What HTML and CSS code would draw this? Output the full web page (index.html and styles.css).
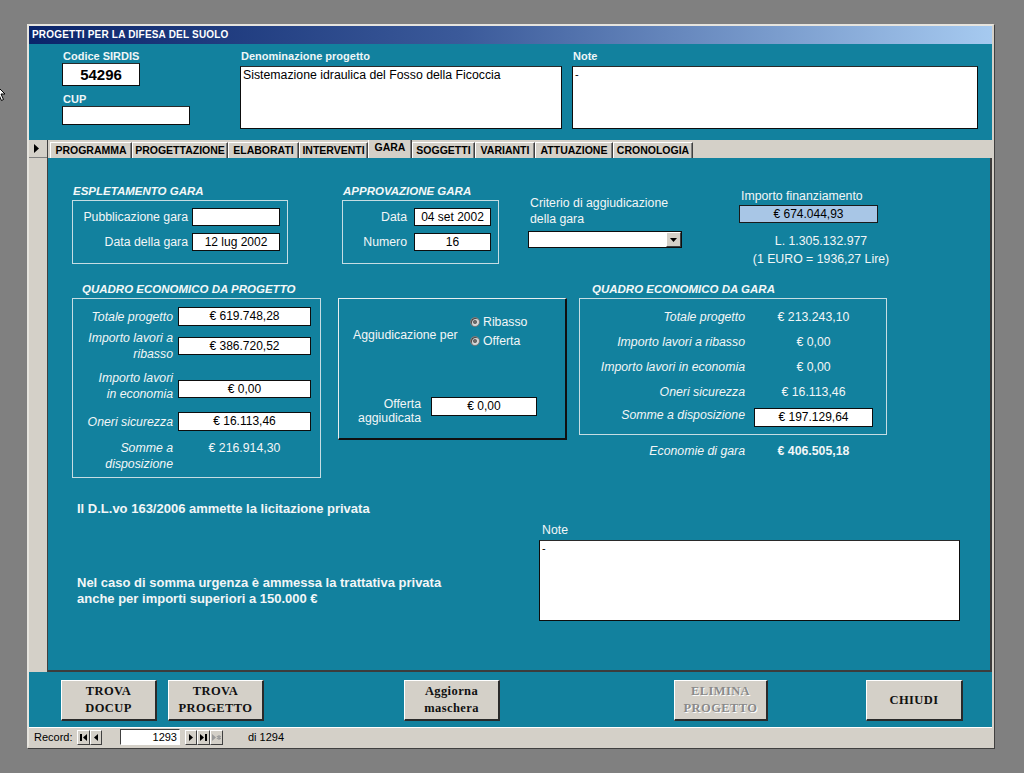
FILE: index.html
```html
<!DOCTYPE html>
<html lang="it">
<head>
<meta charset="utf-8">
<title>Progetti per la difesa del suolo</title>
<link rel="stylesheet" href="styles.css">
</head>
<body>
<svg class="cursor" width="12" height="18" viewBox="0 0 12 18"><path d="M1 1 L1 14 L4 11 L6.5 16.5 L8.5 15.5 L6 10 L10 10 Z" fill="#fff" stroke="#000" stroke-width="1"/></svg>
<div class="window">
  <div class="titlebar">PROGETTI PER LA DIFESA DEL SUOLO</div>
  <div class="header">
    <div class="hcol hcol-code">
      <div class="hlabel">Codice SIRDIS</div>
      <div class="field code-box">54296</div>
      <div class="hlabel cup-label">CUP</div>
      <div class="field cup-box"></div>
    </div>
    <div class="hcol hcol-name">
      <div class="hlabel">Denominazione progetto</div>
      <div class="field memo name-box">Sistemazione idraulica del Fosso della Ficoccia</div>
    </div>
    <div class="hcol hcol-note">
      <div class="hlabel">Note</div>
      <div class="field memo note-box">-</div>
    </div>
  </div>
  <div class="main">
    <div class="selector">
      <div class="sel-cell"><svg width="5" height="9" viewBox="0 0 5 9"><path d="M0 0 L5 4.5 L0 9 Z" fill="#000"/></svg></div>
    </div>
    <div class="tabctl">
      <div class="tabs">
        <div class="tab t1">PROGRAMMA</div>
        <div class="tab t2">PROGETTAZIONE</div>
        <div class="tab t3">ELABORATI</div>
        <div class="tab t4">INTERVENTI</div>
        <div class="tab t5 active">GARA</div>
        <div class="tab t6">SOGGETTI</div>
        <div class="tab t7">VARIANTI</div>
        <div class="tab t8">ATTUAZIONE</div>
        <div class="tab t9">CRONOLOGIA</div>
      </div>
      <div class="page">
        <div class="row row1">
          <div class="grp grp-a">
            <div class="gtitle">ESPLETAMENTO GARA</div>
            <div class="gbox">
              <div class="frow"><span class="lbl">Pubblicazione gara</span><span class="inp w88"></span></div>
              <div class="frow"><span class="lbl">Data della gara</span><span class="inp w88">12 lug 2002</span></div>
            </div>
          </div>
          <div class="grp grp-b">
            <div class="gtitle">APPROVAZIONE GARA</div>
            <div class="gbox">
              <div class="frow"><span class="lbl">Data</span><span class="inp w77">04 set 2002</span></div>
              <div class="frow"><span class="lbl">Numero</span><span class="inp w77">16</span></div>
            </div>
          </div>
          <div class="crit">
            <div class="crit-label">Criterio di aggiudicazione<br>della gara</div>
            <div class="combo"><span class="combo-btn"><svg width="7" height="4" viewBox="0 0 7 4"><path d="M0 0 L7 0 L3.5 4 Z" fill="#000"/></svg></span></div>
          </div>
          <div class="imp">
            <div class="imp-label">Importo finanziamento</div>
            <div class="imp-box">€ 674.044,93</div>
            <div class="imp-lines">L. 1.305.132.977<br>(1 EURO = 1936,27 Lire)</div>
          </div>
        </div>

        <div class="row row2">
          <div class="grp grp-c">
            <div class="gtitle">QUADRO ECONOMICO DA PROGETTO</div>
            <div class="gbox qbox">
              <div class="qrow q1"><span class="qlbl">Totale progetto</span><span class="inp qinp">€ 619.748,28</span></div>
              <div class="qrow q2"><span class="qlbl">Importo lavori a<br>ribasso</span><span class="inp qinp">€ 386.720,52</span></div>
              <div class="qrow q3"><span class="qlbl">Importo lavori<br>in economia</span><span class="inp qinp">€ 0,00</span></div>
              <div class="qrow q4"><span class="qlbl">Oneri sicurezza</span><span class="inp qinp">€ 16.113,46</span></div>
              <div class="qrow q5"><span class="qlbl">Somme a<br>disposizione</span><span class="qval">€ 216.914,30</span></div>
            </div>
          </div>

          <div class="mid">
            <div class="mid-top">
              <div class="mid-label">Aggiudicazione per</div>
              <div class="radios">
                <div class="ropt"><span class="radio"></span>Ribasso</div>
                <div class="ropt"><span class="radio"></span>Offerta</div>
              </div>
            </div>
            <div class="mid-bottom">
              <div class="mid-label2">Offerta<br>aggiudicata</div>
              <span class="inp minp">€ 0,00</span>
            </div>
          </div>

          <div class="grp grp-d">
            <div class="gtitle">QUADRO ECONOMICO DA GARA</div>
            <div class="gbox dbox">
              <div class="drow"><span class="dlbl">Totale progetto</span><span class="dval">€ 213.243,10</span></div>
              <div class="drow"><span class="dlbl">Importo lavori a ribasso</span><span class="dval">€ 0,00</span></div>
              <div class="drow"><span class="dlbl">Importo lavori in economia</span><span class="dval">€ 0,00</span></div>
              <div class="drow"><span class="dlbl">Oneri sicurezza</span><span class="dval">€ 16.113,46</span></div>
              <div class="drow drow-in"><span class="dlbl">Somme a disposizione</span><span class="inp dinp">€ 197.129,64</span></div>
            </div>
            <div class="erow"><span class="elbl">Economie di gara</span><span class="eval">€ 406.505,18</span></div>
          </div>
        </div>

        <div class="row row3">
          <div class="info">
            <p class="info1">Il D.L.vo 163/2006 ammette la licitazione privata</p>
            <p class="info2">Nel caso di somma urgenza è ammessa la trattativa privata<br>anche per importi superiori a 150.000 €</p>
          </div>
          <div class="note2">
            <div class="note2-label">Note</div>
            <div class="field memo note2-box">-</div>
          </div>
        </div>
      </div>
    </div>
  </div>
  <div class="buttons">
    <div class="btn b1">TROVA<br>DOCUP</div>
    <div class="btn b2">TROVA<br>PROGETTO</div>
    <div class="btn b3">Aggiorna<br>maschera</div>
    <div class="btn b4 disabled">ELIMINA<br>PROGETTO</div>
    <div class="btn b5">CHIUDI</div>
  </div>
  <div class="recordbar">
    <span class="rec-label">Record:</span>
    <span class="nav n1"><svg width="7" height="7" viewBox="0 0 7 7"><rect x="0" y="0" width="2" height="7" fill="#000"/><path d="M7 0 L3 3.5 L7 7 Z" fill="#000"/></svg></span>
    <span class="nav n2"><svg width="4" height="7" viewBox="0 0 4 7"><path d="M4 0 L0 3.5 L4 7 Z" fill="#000"/></svg></span>
    <span class="rec-input">1293</span>
    <span class="nav n3"><svg width="4" height="7" viewBox="0 0 4 7"><path d="M0 0 L4 3.5 L0 7 Z" fill="#000"/></svg></span>
    <span class="nav n4"><svg width="7" height="7" viewBox="0 0 7 7"><path d="M0 0 L4 3.5 L0 7 Z" fill="#000"/><rect x="5" y="0" width="2" height="7" fill="#000"/></svg></span>
    <span class="nav n5"><svg width="9" height="7" viewBox="0 0 9 7"><path d="M0 0 L4 3.5 L0 7 Z" fill="#9a9a9a"/><path d="M7 1 L7 6 M4.8 2.2 L9.2 4.8 M4.8 4.8 L9.2 2.2" stroke="#9a9a9a" stroke-width="1.2"/></svg></span>
    <span class="rec-of">di 1294</span>
  </div>
</div>
</body>
</html>
```

FILE: styles.css
```css
* { box-sizing: border-box; }
html, body { margin: 0; padding: 0; }
body {
  background: #808080;
  width: 1024px;
  height: 773px;
  overflow: hidden;
  position: relative;
  font-family: "Liberation Sans", Arial, sans-serif;
  color: #000;
}
.cursor { position: absolute; left: -5px; top: 84px; }

.window {
  margin-left: 27px;
  margin-top: 24px;
  width: 967px;
  height: 724px;
  border: 2px solid #d4d0c8;
  border-top-color: #e6e4de;
  border-left-color: #e6e4de;
  box-shadow: 1px 1px 0 #404040;
  display: flex;
  flex-direction: column;
}

.titlebar {
  height: 18px;
  line-height: 18px;
  padding-left: 3px;
  background: linear-gradient(to right, #0a246a, #3b5a9a 45%, #a6caf0);
  color: #fff;
  font-weight: bold;
  font-size: 10px;
  letter-spacing: 0.2px;
  white-space: nowrap;
}

/* Header */
.header {
  height: 96px;
  background: #12819e;
  display: flex;
  padding-left: 33px;
  padding-top: 5px;
}
.hlabel {
  color: #eef6f8;
  font-weight: bold;
  font-size: 11px;
  line-height: 14px;
  height: 14px;
  padding-left: 1px;
}
.field {
  background: #fff;
  border: 1px solid #0d0d0d;
  border-top-color: #2a2a2a;
}
.hcol-code { width: 128px; }
.code-box {
  width: 78px;
  height: 23px;
  text-align: center;
  font-weight: bold;
  font-size: 15px;
  line-height: 21px;
}
.cup-label { margin-top: 6px; }
.cup-box { width: 128px; height: 19px; margin-top: 0; }
.hcol-name { margin-left: 50px; }
.name-box, .note-box { margin-top: 3px; height: 63px; }
.name-box {
  width: 322px;
  font-size: 12.3px;
  line-height: 15px;
  padding: 1px 2px;
}
.hcol-note { margin-left: 10px; }
.note-box {
  width: 406px;
  font-size: 11px;
  line-height: 12px;
  padding: 1px 2px;
}
.memo { white-space: nowrap; }

/* Main: selector + tab control */
.main {
  height: 532px;
  display: flex;
}
.selector {
  width: 19px;
  background: #d4d0c8;
  border-right: 1px solid #404040;
}
.sel-cell {
  height: 18px;
  border-bottom: 1px solid #808080;
  display: flex;
  align-items: center;
  padding-left: 5px;
}
.tabctl {
  width: 944px;
  display: flex;
  flex-direction: column;
}
.tabs {
  height: 18px;
  background: #d4d0c8;
  display: flex;
  padding-left: 2px;
  align-items: flex-start;
}
.tab {
  height: 16px;
  margin-top: 2px;
  border-top: 1px solid #fff;
  border-left: 1px solid #fff;
  border-right: 1px solid #404040;
  box-shadow: inset -1px 0 0 #808080;
  font-size: 10.5px;
  font-weight: bold;
  line-height: 15px;
  text-align: center;
  white-space: nowrap;
  color: #000;
}
.tab.active {
  margin-top: 0;
  height: 18px;
  line-height: 14px;
  border-top: none;
}
.t1 { width: 82px; }
.t2 { width: 96px; }
.t3 { width: 71px; }
.t4 { width: 69px; }
.t5 { width: 44px; }
.t6 { width: 63px; }
.t7 { width: 60px; }
.t8 { width: 78px; }
.t9 { width: 80px; }

.page {
  height: 514px;
  background: #12819e;
  border-right: 2px solid #3c3c3c;
  border-bottom: 2px solid #3c3c3c;
  padding-top: 26px;
  color: #f2f6f7;
  font-size: 12.3px;
}
.row { display: flex; align-items: flex-start; }
.row1 { height: 82px; }
.row2 { margin-top: 16px; }
.row3 { margin-top: 24px; }

.gtitle {
  font-size: 11.5px;
  font-weight: bold;
  font-style: italic;
  line-height: 14px;
  height: 16px;
  white-space: nowrap;
  color: #f4f8f8;
}
.gbox {
  border: 1px solid #c6dde3;
}
.grp-a { margin-left: 24px; width: 216px; }
.grp-a .gtitle { padding-left: 1px; }
.grp-a .gbox, .grp-b .gbox {
  height: 64px;
  padding: 7px 7px 0 0;
  display: flex;
  flex-direction: column;
  gap: 7px;
}
.frow {
  display: flex;
  justify-content: flex-end;
  align-items: center;
  height: 18px;
  gap: 4px;
}
.grp-b .frow { gap: 7px; }
.lbl { white-space: nowrap; line-height: 14px; }
.inp {
  display: block;
  background: #fff;
  color: #000;
  border: 1px solid #0d0d0d;
  height: 18px;
  font-size: 12px;
  line-height: 16px;
  text-align: center;
  white-space: nowrap;
}
.w88 { width: 88px; }
.w77 { width: 77px; }
.grp-b { margin-left: 54px; width: 157px; }
.grp-b .gtitle { padding-left: 1px; }

.crit { margin-left: 29px; margin-top: 11px; width: 154px; }
.crit-label { line-height: 16px; padding-left: 2px; white-space: nowrap; }
.combo {
  margin-top: 4px;
  height: 17px;
  background: #fff;
  border: 1px solid #0d0d0d;
  display: flex;
  justify-content: flex-end;
}
.combo-btn {
  width: 15px;
  height: 15px;
  background: #d4d0c8;
  border-top: 1px solid #fff;
  border-left: 1px solid #fff;
  border-right: 1px solid #404040;
  border-bottom: 1px solid #404040;
  display: flex;
  align-items: center;
  justify-content: center;
}

.imp { margin-left: 57px; margin-top: 5px; width: 164px; }
.imp-label { line-height: 14px; padding-left: 2px; white-space: nowrap; }
.imp-box {
  margin-top: 2px;
  width: 139px;
  height: 18px;
  background: #a8c6e6;
  color: #000;
  border: 1px solid #1a1a1a;
  font-size: 12px;
  line-height: 16px;
  text-align: center;
}
.imp-lines {
  margin-top: 9px;
  line-height: 18px;
  text-align: center;
  white-space: nowrap;
}

/* Quadro progetto */
.grp-c { margin-left: 24px; width: 249px; }
.grp-c .gtitle { padding-left: 10px; }
.qbox { height: 180px; padding-top: 8px; font-style: italic; }
.qrow { display: flex; align-items: flex-start; }
.qlbl {
  width: 101px;
  text-align: right;
  line-height: 16px;
  padding-right: 1px;
  white-space: nowrap;
}
.qinp { width: 133px; margin-left: 4px; font-style: normal; }
.qval { width: 133px; margin-left: 4px; text-align: center; line-height: 16px; font-style: normal; }
.q1, .q4 { align-items: center; height: 19px; }
.q1 .qinp, .q4 .qinp { height: 19px; line-height: 17px; }
.q2 { margin-top: 4px; }
.q2 .qinp { margin-top: 7px; }
.q3 { margin-top: 8px; }
.q3 .qinp { margin-top: 10px; }
.q4 { margin-top: 10px; }
.q5 { margin-top: 9px; }

/* Middle box */
.mid {
  margin-left: 17px;
  margin-top: 16px;
  width: 229px;
  height: 142px;
  border-top: 1px solid #e8eef0;
  border-left: 1px solid #e8eef0;
  border-right: 2px solid #101010;
  border-bottom: 2px solid #101010;
}
.mid-top { display: flex; padding-top: 13px; }
.mid-label {
  width: 131px;
  padding-left: 14px;
  padding-top: 16px;
  line-height: 15px;
  white-space: nowrap;
}
.ropt {
  display: flex;
  align-items: center;
  height: 19px;
  gap: 3px;
  white-space: nowrap;
}
.radio {
  width: 10px;
  height: 10px;
  border-radius: 50%;
  border: 1px solid #7a7a7a;
  background: radial-gradient(circle, #6a6a6a 0 1.6px, #d6d6d6 2.4px);
  box-shadow: inset 1px 1px 0 #444;
}
.mid-bottom { display: flex; margin-top: 47px; align-items: flex-start; }
.mid-label2 {
  width: 82px;
  text-align: right;
  line-height: 14px;
}
.minp { width: 106px; margin-left: 10px; height: 19px; line-height: 17px; }

/* Quadro gara */
.grp-d { margin-left: 12px; width: 308px; }
.grp-d .gtitle { padding-left: 13px; }
.dbox { height: 137px; padding-top: 5px; font-style: italic; }
.drow { display: flex; align-items: center; height: 25px; }
.dlbl { width: 165px; text-align: right; white-space: nowrap; line-height: 14px; }
.dval { width: 119px; margin-left: 9px; text-align: center; font-style: normal; white-space: nowrap; }
.drow-in { margin-top: 4px; height: 19px; align-items: flex-start; }
.dinp { width: 119px; margin-left: 9px; height: 19px; line-height: 17px; font-style: normal; }
.erow { display: flex; margin-top: 9px; line-height: 14px; }
.elbl { width: 166px; text-align: right; font-style: italic; }
.eval { width: 119px; margin-left: 9px; text-align: center; font-weight: bold; font-size: 12.3px; }

/* Row 3 */
.info { margin-left: 29px; width: 462px; }
.info p { margin: 0; font-weight: bold; font-size: 13px; white-space: nowrap; }
.info1 { line-height: 14px; }
.info2 { margin-top: 59px !important; line-height: 16px; }
.note2 { margin-top: 21px; }
.note2-label { line-height: 14px; padding-left: 3px; }
.note2-box {
  margin-top: 3px;
  width: 421px;
  height: 81px;
  color: #000;
  font-size: 11px;
  line-height: 12px;
  padding: 1px 2px;
}

/* Buttons */
.buttons {
  height: 55px;
  background: #12819e;
  display: flex;
  align-items: flex-start;
  padding-top: 8px;
}
.btn {
  width: 96px;
  height: 41px;
  background: #d4d0c8;
  border-top: 1px solid #fff;
  border-left: 1px solid #fff;
  border-right: 2px solid #2a2a2a;
  border-bottom: 2px solid #2a2a2a;
  font-family: "Liberation Serif", "Times New Roman", serif;
  font-weight: bold;
  font-size: 12.5px;
  letter-spacing: 0.4px;
  line-height: 17px;
  text-align: center;
  display: flex;
  align-items: center;
  justify-content: center;
  color: #111;
}
.b1 { margin-left: 32px; }
.b2 { margin-left: 11px; }
.b3 { margin-left: 140px; }
.b4 { margin-left: 174px; width: 94px; }
.b5 { margin-left: 98px; width: 97px; }
.btn.disabled { color: #8a8a8a; text-shadow: 1px 1px 0 #fff; }

/* Record bar */
.recordbar {
  height: 19px;
  background: #d4d0c8;
  display: flex;
  align-items: center;
  padding-left: 5px;
  font-size: 11px;
  border-top: 1px solid #fff;
}
.rec-label { width: 43px; }
.nav {
  height: 15px;
  flex: none;
  background: #d4d0c8;
  border-top: 1px solid #fff;
  border-left: 1px solid #fff;
  border-right: 1px solid #404040;
  border-bottom: 1px solid #404040;
  display: flex;
  align-items: center;
  justify-content: center;
}
.n1 { width: 13px; }
.n2 { width: 12px; }
.n3 { width: 12px; margin-left: 5px; }
.n4 { width: 13px; }
.n5 { width: 13px; }
.rec-input {
  margin-left: 18px;
  width: 60px;
  height: 16px;
  background: #fff;
  border-top: 1px solid #404040;
  border-left: 1px solid #404040;
  border-right: 1px solid #fff;
  border-bottom: 1px solid #fff;
  text-align: right;
  line-height: 14px;
  padding-right: 2px;
}
.rec-of { margin-left: 25px; }
```
